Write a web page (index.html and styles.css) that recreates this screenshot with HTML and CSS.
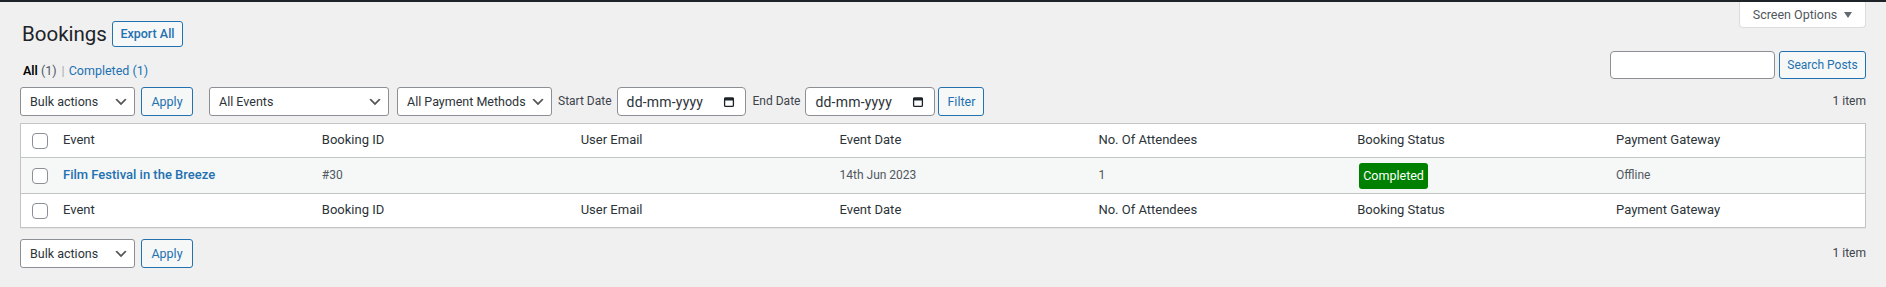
FILE: index.html
```html
<!DOCTYPE html>
<html>
  <head>
    <link rel="stylesheet" href="styles.css">
  </head>
  <body>
    <div class="admin-bar"></div>
    <div class="wrap">
      <div class="top">
        <div class="top-left">
          <div class="title-row">
            <h1>Bookings</h1>
            <a class="page-title-action" href="#">Export All</a>
          </div>
          <ul class="subsubsub">
            <li class="current">All <span class="count">(1)</span></li>
            <li class="sep">|</li>
            <li><a href="#">Completed <span class="count">(1)</span></a></li>
          </ul>
        </div>
        <div class="top-right">
          <button type="button" class="screen-options">
            Screen Options
            <svg class="arrow" width="8" height="6" viewBox="0 0 8 6"><path d="M0 0h8L4 6z" fill="#646970"/></svg>
          </button>
          <div class="search-box">
            <input type="search" class="search-input">
            <button type="button" class="button search-btn">Search Posts</button>
          </div>
        </div>
      </div>

      <div class="tablenav">
        <select class="bulk-select">
          <option>Bulk actions</option>
        </select>
        <button type="button" class="button apply-btn">Apply</button>
        <select class="events-select">
          <option>All Events</option>
        </select>
        <select class="payment-select">
          <option>All Payment Methods</option>
        </select>
        <span class="date-label">Start Date</span>
        <label class="date-field">
          <input type="text" placeholder="dd-mm-yyyy">
          <svg width="12" height="12" viewBox="0 0 12 12"><rect x="1.6" y="2.2" width="8.8" height="8.2" rx="1" fill="none" stroke="#1d2327" stroke-width="1.3"/><rect x="1" y="1.6" width="10" height="3" rx="1" fill="#1d2327"/></svg>
        </label>
        <span class="date-label">End Date</span>
        <label class="date-field end">
          <input type="text" placeholder="dd-mm-yyyy">
          <svg width="12" height="12" viewBox="0 0 12 12"><rect x="1.6" y="2.2" width="8.8" height="8.2" rx="1" fill="none" stroke="#1d2327" stroke-width="1.3"/><rect x="1" y="1.6" width="10" height="3" rx="1" fill="#1d2327"/></svg>
        </label>
        <button type="button" class="button filter-btn">Filter</button>
        <span class="displaying-num">1 item</span>
      </div>

      <table class="widefat">
        <thead>
          <tr>
            <th class="check-column"><input type="checkbox"></th>
            <th>Event</th>
            <th>Booking ID</th>
            <th>User Email</th>
            <th>Event Date</th>
            <th>No. Of Attendees</th>
            <th>Booking Status</th>
            <th>Payment Gateway</th>
          </tr>
        </thead>
        <tbody>
          <tr>
            <td class="check-column"><input type="checkbox"></td>
            <td><a class="row-title" href="#">Film Festival in the Breeze</a></td>
            <td>#30</td>
            <td></td>
            <td>14th Jun 2023</td>
            <td>1</td>
            <td><span class="status-badge">Completed</span></td>
            <td>Offline</td>
          </tr>
        </tbody>
        <tfoot>
          <tr>
            <th class="check-column"><input type="checkbox"></th>
            <th>Event</th>
            <th>Booking ID</th>
            <th>User Email</th>
            <th>Event Date</th>
            <th>No. Of Attendees</th>
            <th>Booking Status</th>
            <th>Payment Gateway</th>
          </tr>
        </tfoot>
      </table>

      <div class="tablenav bottom">
        <select class="bulk-select">
          <option>Bulk actions</option>
        </select>
        <button type="button" class="button apply-btn">Apply</button>
        <span class="displaying-num">1 item</span>
      </div>
    </div>
  </body>
</html>
```

FILE: styles.css
```css
body {
  margin: 0;
  background: #f0f0f1;
  color: #3c434a;
  font-family: Roboto, "Liberation Sans", sans-serif;
  font-size: 12.5px;
  line-height: 1.4;
}

.admin-bar {
  height: 2px;
  background: #1d2327;
}

.wrap {
  padding: 0 20px;
}

.top {
  display: flex;
  justify-content: space-between;
}

.title-row {
  display: flex;
  align-items: center;
  padding-top: 19px;
}

.title-row h1 {
  margin: 0 5px 0 2px;
  font-size: 20.5px;
  font-weight: 400;
  line-height: 26px;
  color: #1d2327;
}

.page-title-action {
  display: flex;
  align-items: center;
  justify-content: center;
  box-sizing: border-box;
  width: 71px;
  height: 26px;
  border: 1px solid #2271b1;
  border-radius: 3px;
  background: #f6f7f7;
  color: #2271b1;
  font-size: 12.5px;
  font-weight: 500;
  text-decoration: none;
}

.subsubsub {
  display: flex;
  list-style: none;
  margin: 15px 0 0 3px;
  padding: 0;
  line-height: 18px;
  font-size: 12.5px;
  color: #50575e;
}

.subsubsub .current {
  color: #000;
  font-weight: 600;
}

.subsubsub .current .count {
  color: #50575e;
  font-weight: 400;
}

.subsubsub .sep {
  margin: 0 4px 0 5px;
  color: #a7aaad;
}

.subsubsub a {
  color: #2271b1;
  text-decoration: none;
}

.top-right {
  display: flex;
  flex-direction: column;
  align-items: flex-end;
}

.screen-options {
  display: flex;
  align-items: center;
  justify-content: center;
  gap: 7px;
  width: 127px;
  height: 26px;
  padding: 0;
  border: 1px solid #dcdcde;
  border-top: none;
  border-radius: 0 0 4px 4px;
  background: #fff;
  color: #50575e;
  font-family: inherit;
  font-size: 12.5px;
}

.search-box {
  display: flex;
  gap: 4px;
  margin-top: 23px;
}

.search-input {
  box-sizing: border-box;
  width: 165px;
  height: 28px;
  margin: 0;
  border: 1px solid #8c8f94;
  border-radius: 4px;
  background: #fff;
}

.button {
  box-sizing: border-box;
  height: 29px;
  margin: 0;
  padding: 0;
  border: 1px solid #2271b1;
  border-radius: 3px;
  background: #f6f7f7;
  color: #2271b1;
  font-family: inherit;
  font-size: 12.5px;
  text-align: center;
}

.search-btn {
  width: 87px;
  height: 28px;
  font-size: 12px;
}

.tablenav {
  display: flex;
  align-items: flex-start;
  height: 29px;
  margin-top: 7px;
}

.tablenav.bottom {
  margin-top: 11px;
}

.tablenav select {
  box-sizing: border-box;
  height: 29px;
  margin: 0;
  padding: 0 24px 0 9px;
  border: 1px solid #8c8f94;
  border-radius: 3px;
  background: #fff url("data:image/svg+xml;charset=US-ASCII,%3Csvg%20width%3D%2220%22%20height%3D%2220%22%20xmlns%3D%22http%3A%2F%2Fwww.w3.org%2F2000%2Fsvg%22%3E%3Cpath%20d%3D%22M5%206l5%205%205-5%202%201-7%207-7-7%202-1z%22%20fill%3D%22%23555%22%2F%3E%3C%2Fsvg%3E") no-repeat right 5px top 55%;
  background-size: 16px 16px;
  color: #2c3338;
  font-family: inherit;
  font-size: 12.5px;
  -webkit-appearance: none;
  appearance: none;
}

.bulk-select {
  width: 115px;
  margin-right: 6px !important;
}

.apply-btn {
  width: 52px;
  margin-right: 16px;
}

.events-select {
  width: 180px;
  margin-right: 8px !important;
}

.payment-select {
  width: 155px;
  margin-right: 6px !important;
}

.date-label {
  line-height: 29px;
  margin-right: 5px;
  font-size: 12px;
  color: #3c434a;
}

.date-field {
  display: flex;
  align-items: center;
  box-sizing: border-box;
  width: 129px;
  height: 29px;
  margin-right: 7px;
  padding: 0 10px 0 9px;
  border: 1px solid #8c8f94;
  border-radius: 4px;
  background: #fff;
}

.date-field.end {
  width: 130px;
  margin-right: 3px;
}

.date-field input {
  flex: 1;
  min-width: 0;
  margin: 0;
  padding: 0;
  border: none;
  outline: none;
  background: transparent;
  font-family: inherit;
  font-size: 14px;
  letter-spacing: 0.2px;
}

.date-field input::placeholder {
  color: #2c3338;
}

.filter-btn {
  width: 46px;
}

.displaying-num {
  margin-left: auto;
  line-height: 29px;
  font-size: 12px;
  color: #3c434a;
}

.widefat {
  width: 100%;
  margin-top: 7px;
  border: 1px solid #c3c4c7;
  border-spacing: 0;
  background: #fff;
  table-layout: fixed;
  box-shadow: 0 1px 1px rgba(0, 0, 0, 0.04);
}

.widefat th,
.widefat td {
  box-sizing: border-box;
  padding: 0 10px;
  text-align: left;
  font-weight: 400;
  vertical-align: middle;
}

.widefat thead th,
.widefat tfoot th {
  font-size: 13px;
  color: #2c3338;
}

.widefat thead th {
  height: 34px;
  border-bottom: 1px solid #c3c4c7;
}

.widefat tfoot th {
  height: 33px;
}

.widefat tbody td {
  height: 36px;
  border-bottom: 1px solid #c3c4c7;
  background: #f6f7f7;
  font-size: 12px;
  color: #50575e;
}

.widefat .check-column {
  width: 32px;
  padding: 0 0 0 11px;
}

.check-column input {
  display: block;
  width: 16px;
  height: 16px;
  margin: 0;
  border: 1px solid #8c8f94;
  border-radius: 4px;
  background: #fff;
  -webkit-appearance: none;
  appearance: none;
}

.row-title {
  color: #2271b1;
  font-weight: 500;
  font-size: 13px;
  text-decoration: none;
}

.status-badge {
  display: inline-block;
  margin-left: 2px;
  padding: 0 4px;
  border-radius: 3px;
  background: #008000;
  color: #fff;
  font-size: 12.5px;
  line-height: 26px;
}
```
